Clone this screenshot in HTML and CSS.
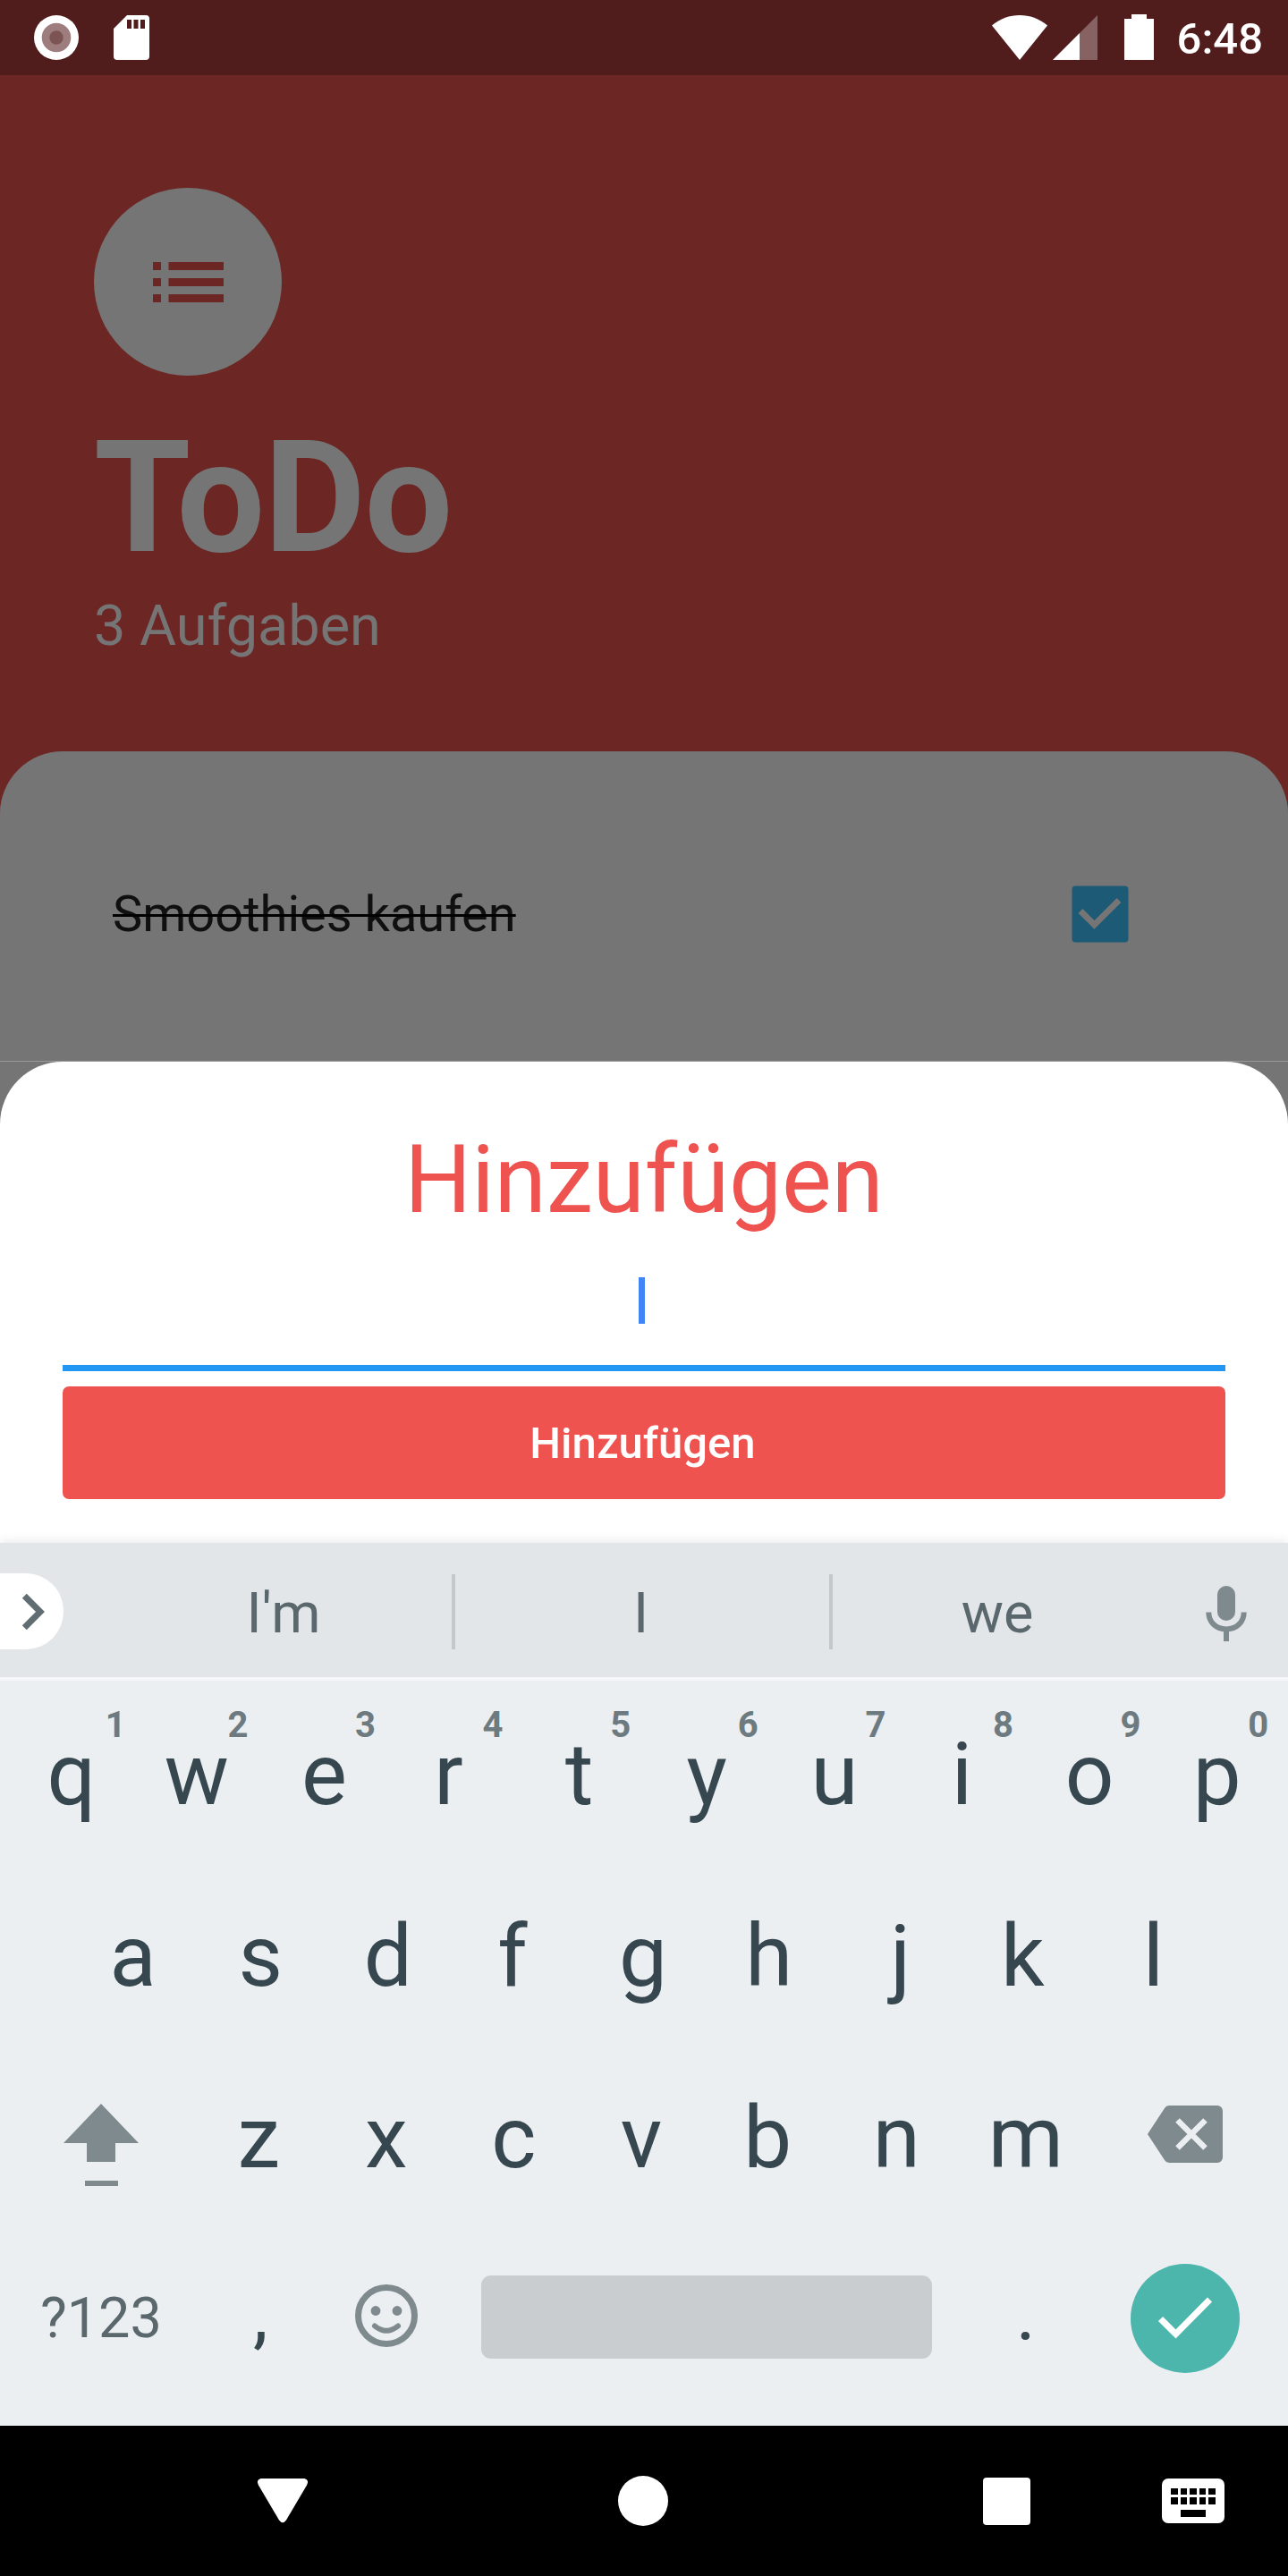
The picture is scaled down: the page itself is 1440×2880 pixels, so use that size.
FILE: index.html
```html
<!DOCTYPE html>
<html lang="de">
<head>
<meta charset="utf-8">
<title>ToDo</title>
<link rel="stylesheet" href="styles.css">
</head>
<body>
<div class="screen">
  <div class="status">
    <svg class="status-rec" width="50" height="50" viewBox="0 0 50 50"><circle cx="25" cy="25" r="25" fill="#fff"/><circle cx="25" cy="25" r="16.3" fill="#9d7d7d"/><circle cx="25" cy="25" r="7.7" fill="#7d5454"/></svg>
    <svg class="status-sd" width="40" height="50" viewBox="0 0 40 50"><path fill="#fff" fill-rule="evenodd" d="M15 0H36a4 4 0 0 1 4 4V46a4 4 0 0 1-4 4H4a4 4 0 0 1-4-4V15ZM15 5V15H20V5ZM22.5 5V15H27.500V5ZM30 5V15H35V5Z"/></svg>
    <svg class="status-wifi" width="62" height="50" viewBox="0 0 62 50"><path fill="#fff" d="M0 11.500C18-3.800 44-3.800 62 11.500L31 50Z"/></svg>
    <svg class="status-signal" width="50" height="50" viewBox="0 0 50 50"><path fill="#fff" fill-opacity=".31" d="M50 0V50H30V20Z"/><path fill="#fff" d="M30 20V50H0Z"/></svg>
    <svg class="status-battery" width="33" height="51" viewBox="0 0 33 51"><path fill="#fff" d="M8 0H25V5H33V51H0V5H8Z"/></svg>
    <span class="status-time">6:48</span>
  </div>

  <header class="header">
    <div class="badge">
      <svg width="79" height="45" viewBox="0 0 79 45" fill="#6c2624"><path d="M0 0H9V9H0ZM0 18H9V27H0ZM0 36H9V45H0ZM17.500 0H79V9H17.500ZM17.500 18H79V27H17.500ZM17.500 36H79V45H17.500Z"/></svg>
    </div>
    <h1 class="title">ToDo</h1>
    <p class="count">3 Aufgaben</p>
  </header>

  <div class="list-wrap">
    <div class="task">
      <span class="task-name">Smoothies kaufen</span>
      <svg width="64" height="64" viewBox="0 0 64 64"><rect x=".5" y=".5" width="63" height="63" rx="4" fill="#1d5a75"/><path d="M10 28.500 25.500 44 53 16.500" fill="none" stroke="#757575" stroke-width="6.800"/></svg>
    </div>
  </div>

  <div class="modal-wrap">
    <div class="modal">
      <h2 class="modal-title">Hinzufügen</h2>
      <div class="input"><div class="caret"></div></div>
      <button class="add">Hinzufügen</button>
    </div>
  </div>

  <div class="keyboard">
    <div class="strip">
      <div class="chip"><svg width="27" height="42" viewBox="0 0 27 42"><path d="M3.300 3.300 21 21 3.300 38.700" fill="none" stroke="#606d73" stroke-width="7"/></svg></div>
      <div class="word word-first">I'm</div>
      <div class="word word-second">I</div>
      <div class="word word-third">we</div>
      <div class="mic"><svg width="46" height="62" viewBox="0 0 46 62"><rect x="13" width="20" height="39" rx="10" fill="#7f8a8f"/><path d="M3.300 29.500C3.300 41 12 48.500 23 48.500S42.700 41 42.700 29.500M23 48V62" fill="none" stroke="#7f8a8f" stroke-width="6"/></svg></div>
    </div>
    <div class="rows">
      <div class="row row-top">
        <div class="key key-right">q<span class="hint hint-one">1</span></div><div class="key">w<span class="hint">2</span></div><div class="key">e<span class="hint">3</span></div><div class="key key-left-more">r<span class="hint">4</span></div><div class="key">t<span class="hint">5</span></div><div class="key">y<span class="hint">6</span></div><div class="key">u<span class="hint">7</span></div><div class="key">i<span class="hint">8</span></div><div class="key">o<span class="hint">9</span></div><div class="key">p<span class="hint">0</span></div>
      </div>
      <div class="row row-inset">
        <div class="key">a</div><div class="key">s</div><div class="key">d</div><div class="key key-left-more">f</div><div class="key">g</div><div class="key key-left">h</div><div class="key key-right">j</div><div class="key key-left-more">k</div><div class="key">l</div>
      </div>
      <div class="row row-shift">
        <div class="key key-shift"><svg width="84" height="93" viewBox="0 0 84 93" fill="#7f8a8f"><path d="M42 0 84 44H58V65H26V44H0ZM24 86H61V92H24Z"/></svg></div>
        <div class="key key-left">z</div><div class="key key-left">x</div><div class="key key-left">c</div><div class="key key-left">v</div><div class="key key-left-more">b</div><div class="key key-left">n</div><div class="key">m</div>
        <div class="key key-delete"><svg width="84" height="64" viewBox="0 0 84 64"><path fill="#7f8a8f" d="M24 0H78a6 6 0 0 1 6 6V58a6 6 0 0 1-6 6H24q-3.200 0-5-3L0 32 19 3Q20.800 0 24 0Z"/><path d="M33.500 16.500 64.500 47.500M64.500 16.500 33.500 47.500" stroke="#ebeff2" stroke-width="6.500"/></svg></div>
      </div>
      <div class="row row-bottom">
        <div class="key key-symbols">?123</div>
        <div class="key key-mark">,</div>
        <div class="key key-emoji"><svg width="70" height="70" viewBox="0 0 70 70"><circle cx="35" cy="35" r="31.500" fill="none" stroke="#7f8a8f" stroke-width="7"/><circle cx="23" cy="29.500" r="5.400" fill="#7f8a8f"/><circle cx="47" cy="29.500" r="5.400" fill="#7f8a8f"/><path d="M22 46.500Q35 57 48 46.500" fill="none" stroke="#7f8a8f" stroke-width="6" stroke-linecap="round"/></svg></div>
        <div class="key key-space"><div class="space"></div></div>
        <div class="key key-mark">.</div>
        <div class="key key-enter"><div class="enter"><svg width="62" height="48" viewBox="0 0 62 48"><path d="M3.500 24.500 20.500 41.500 58.500 3" fill="none" stroke="#fff" stroke-width="7.200"/></svg></div></div>
      </div>
    </div>
  </div>

  <nav class="nav">
    <svg class="nav-back" width="56" height="50" viewBox="0 0 56 50"><path fill="#fff" d="M3.500 0H52.500Q58 1.500 55 7.500L32 46.500Q28 52 24 46.500L1 7.500Q-2 1.500 3.500 0Z"/></svg>
    <svg class="nav-home" width="56" height="56" viewBox="0 0 56 56"><circle cx="28" cy="28" r="28" fill="#fff"/></svg>
    <svg class="nav-recent" width="53" height="53" viewBox="0 0 53 53"><rect width="53" height="53" rx="4" fill="#fff"/></svg>
    <svg class="nav-ime" width="70" height="50" viewBox="0 0 70 50"><rect width="70" height="50" rx="7" fill="#fff"/><path d="M10 11h8v7h-8zm11 0h7v7h-7zm10 0h8v7h-8zm11 0h7v7h-7zm10 0h8v7h-8zM10 21h8v8h-8zm11 0h7v8h-7zm10 0h8v8h-8zm11 0h7v8h-7zm10 0h8v8h-8zM21 35h28v8H21z"/></svg>
  </nav>
</div>
</body>
</html>
```
FILE: styles.css
```css
* { box-sizing: border-box; }
body { margin: 0; background: #000; font-family: Roboto, "Liberation Sans", sans-serif; }
h1, h2, p { margin: 0; }
svg { display: block; flex: none; }

.screen { width: 1440px; height: 2880px; display: flex; flex-direction: column; overflow: hidden; }

.status { height: 84px; flex: none; display: flex; align-items: center; padding: 0 28px 0 38px; background: #511c1c; }
.status-sd { margin-left: 39px; }
.status-wifi { margin-left: auto; }
.status-signal { margin-left: 6px; }
.status-battery { margin: 0 26px 1px 30px; }
.status-time { padding-top: 4px; font-size: 49px; font-weight: 500; line-height: 58px; color: #fff; }

.header { height: 756px; flex: none; padding: 126px 105px 0; background: #6c2624; color: #757575; }
.badge { width: 210px; height: 210px; border-radius: 50%; background: #757575; display: flex; align-items: center; justify-content: center; padding-top: 1px; }
.title { margin-top: 34px; font-size: 175px; font-weight: 700; line-height: 205px; letter-spacing: -1.2px; }
.count { margin-top: 4px; font-size: 63px; line-height: 74px; }

.list-wrap { flex: none; background: #6c2624; }
.task { height: 347px; display: flex; align-items: center; justify-content: space-between; padding: 17px 178px 0 126px; border-radius: 70px 70px 0 0; background: #757575; box-shadow: inset 0 -1px #999; }
.task-name { font-size: 56px; line-height: 66px; color: #101010; text-decoration: line-through #000 3px; }

.modal-wrap { flex: none; background: #757575; }
.modal { height: 538px; padding: 71px 70px 0; border-radius: 70px 70px 0 0; background: #fff; }
.modal-title { font-size: 105px; font-weight: 400; line-height: 124px; text-align: center; color: #ef5350; }
.input { height: 151px; padding: 46px 5px 0 0; border-bottom: 7px solid #2196f3; display: flex; justify-content: center; }
.caret { width: 7px; height: 52px; background: #4285f4; }
.add { display: block; width: 100%; height: 126px; margin-top: 17px; padding: 2px 3px 0 0; border: 0; border-radius: 7px; background: #ef5350; color: #fff; font: 500 49px/58px Roboto, "Liberation Sans", sans-serif; }

.keyboard { height: 987px; flex: none; display: flex; flex-direction: column; background: #ebeff2; box-shadow: 0 0 12px rgba(0, 0, 0, .12); }
.strip { height: 154px; display: flex; align-items: center; padding-top: 3px; border-bottom: 4px solid #f5f7f9; background: #e2e6e9; }
.chip { width: 71px; height: 85px; display: flex; align-items: center; padding-left: 24px; border-radius: 0 42px 42px 0; background: #fff; }
.word { width: 422px; height: 84px; border-left: 4px solid #c3c8cb; padding-top: 2px; text-align: center; font-size: 63px; line-height: 84px; color: #5a686e; }
.word-first { width: 378px; margin-left: 56px; border-left: 0; padding-left: 2px; }
.word-second { padding-right: 3px; }
.word-third { width: 375px; padding-right: 3px; }
.mic { margin-left: 46px; padding-top: 5px; }

.rows { padding: 3px 8px 0 6px; }
.row { height: 203.300px; display: grid; }
.row-top { grid-template-columns: repeat(10, minmax(0, 1fr)); }
.row-inset { grid-template-columns: repeat(9, minmax(0, 1fr)); padding: 0 5%; }
.row-shift { grid-template-columns: 1.5fr repeat(7, minmax(0, 1fr)) 1.5fr; }
.row-bottom { grid-template-columns: 1.5fr 1fr 1fr 4fr 1fr 1.5fr; }
.key { min-width: 0; position: relative; display: flex; align-items: center; justify-content: center; font-size: 96px; line-height: 112px; color: #37474f; }
.key-left { padding-right: 4px; }
.key-left-more { padding-right: 7px; }
.key-right { padding-left: 5px; }
.hint { position: absolute; left: calc(50% + 23px); top: 24px; width: 46px; text-align: center; font-size: 40px; font-weight: 700; line-height: 46px; color: #6d7a80; }
.hint-one { left: calc(50% + 29px); }
.key-shift { padding-top: 17px; }
.key-delete { padding-bottom: 9px; }
.key-symbols { font-size: 63px; color: #5a686e; padding-bottom: 4px; }
.key-mark { font-size: 84px; padding-bottom: 12px; }
.key-emoji { padding: 0 3px 10px 0; }
.key-space { padding-bottom: 7px; }
.space { width: 504px; height: 93px; border-radius: 11px; background: #c9cdd0; }
.key-enter { padding-bottom: 3px; }
.enter { width: 122px; height: 122px; display: flex; align-items: center; justify-content: center; border-radius: 50%; background: #4db6ac; }

.nav { height: 168px; flex: none; display: flex; align-items: center; padding-left: 287.500px; background: #000; }
.nav-home { margin-left: 347.500px; }
.nav-recent { margin-left: 351.500px; }
.nav-ime { margin-left: 147.500px; }
```
